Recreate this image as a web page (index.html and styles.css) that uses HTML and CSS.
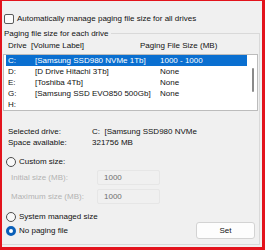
FILE: index.html
```html
<!DOCTYPE html>
<html>
<head>
<meta charset="utf-8">
<link rel="stylesheet" href="styles.css">
</head>
<body>
<div class="frame">
  <label class="auto">
    <span class="check"></span>
    <span>Automatically manage paging file size for all drives</span>
  </label>
  <fieldset class="group">
    <legend class="legend">Paging file size for each drive</legend>
    <div class="head">
      <span class="c-drive">Drive&nbsp; [Volume Label]</span>
      <span class="c-headsize">Paging File Size (MB)</span>
    </div>
    <div class="list">
      <div class="rows">
        <div class="row sel"><span class="c-letter">C:</span><span class="c-label">[Samsung SSD980 NVMe 1Tb]</span><span class="c-size">1000 - 1000</span></div>
        <div class="row"><span class="c-letter">D:</span><span class="c-label">[D Drive Hitachi 3Tb]</span><span class="c-size">None</span></div>
        <div class="row"><span class="c-letter">E:</span><span class="c-label">[Toshiba 4Tb]</span><span class="c-size">None</span></div>
        <div class="row"><span class="c-letter">G:</span><span class="c-label">[Samsung SSD EVO850 500Gb]</span><span class="c-size">None</span></div>
        <div class="row"><span class="c-letter">H:</span><span class="c-label"></span><span class="c-size"></span></div>
      </div>
      <div class="scroll"><div class="thumb"></div></div>
    </div>
    <div class="info">
      <span>Selected drive:</span><span>C:&nbsp; [Samsung SSD980 NVMe</span>
      <span>Space available:</span><span>321756 MB</span>
    </div>
    <div class="radio custom"><span class="dot"></span><span>Custom size:</span></div>
    <div class="field">
      <span class="flabel">Initial size (MB):</span>
      <span class="box">1000</span>
    </div>
    <div class="field">
      <span class="flabel">Maximum size (MB):</span>
      <span class="box">1000</span>
    </div>
    <div class="radio system"><span class="dot"></span><span>System managed size</span></div>
    <div class="bottom">
      <div class="radio"><span class="dot on"></span><span>No paging file</span></div>
      <button class="set">Set</button>
    </div>
  </fieldset>
</div>
</body>
</html>
```

FILE: styles.css
```css
html, body {
  margin: 0;
  padding: 0;
  background: #ffffff;
}
body {
  width: 265px;
  height: 250px;
  font-family: "Liberation Sans", Arial, sans-serif;
  font-size: 8px;
  line-height: 11px;
  color: #111111;
}
.frame {
  box-sizing: border-box;
  width: 265px;
  height: 250px;
  background: #f0f0f0;
  border-style: solid;
  border-color: #e3131c;
  border-width: 1px 3px 3px 2px;
  padding: 12px 0 0 0;
  display: flex;
  flex-direction: column;
}
.auto {
  display: flex;
  align-items: center;
  gap: 3px;
  padding-left: 2px;
  height: 11px;
}
.check {
  width: 8px;
  height: 8px;
  border: 1px solid #5a5a5a;
  border-radius: 2px;
  background: #fbfbfb;
}
.group {
  margin: 4px 2px 2px 0;
  padding: 0;
  border: 1px solid #d9d9d9;
  border-left: none;
  flex: 1;
  min-width: 0;
}
.legend {
  padding: 0 2px;
  margin-left: 0;
  line-height: 11px;
}
.head {
  display: flex;
  margin-top: 1px;
  height: 11px;
  padding-left: 6px;
}
.c-drive {
  width: 132px;
}
.list {
  margin: 3px 1px 0 1px;
  height: 55px;
  border: 1px solid #bcbcbc;
  background: #ffffff;
  display: flex;
}
.rows {
  flex: 1;
  padding-left: 2px;
}
.row {
  display: flex;
  height: 11px;
  padding-left: 2px;
}
.row.sel {
  background: #0a6fd0;
  color: #ffffff;
}
.c-letter {
  width: 27px;
}
.c-label {
  width: 125px;
  white-space: nowrap;
}
.scroll {
  width: 10px;
  position: relative;
}
.thumb {
  position: absolute;
  left: 5px;
  top: 13px;
  width: 2px;
  height: 24px;
  background: #8a8a8a;
  border-radius: 1px;
}
.info {
  display: grid;
  grid-template-columns: 84px auto;
  margin-top: 16px;
  padding-left: 6px;
  line-height: 10.5px;
}
.radio {
  display: flex;
  align-items: center;
  gap: 3px;
  padding-left: 4px;
  height: 11px;
}
.custom {
  margin-top: 8px;
}
.dot {
  box-sizing: border-box;
  width: 10px;
  height: 10px;
  border: 1px solid #4d4d4d;
  border-radius: 50%;
  background: #f8f8f8;
}
.dot.on {
  border: 3px solid #0a5fb8;
  background: #ffffff;
}
.field {
  display: flex;
  align-items: center;
  padding-left: 9px;
  margin-top: 3px;
  height: 15px;
  color: #b3b3b3;
}
.field + .field {
  margin-top: 4px;
}
.flabel {
  width: 86px;
}
.box {
  box-sizing: border-box;
  width: 63px;
  height: 15px;
  border: 1px solid #e6e6e6;
  border-radius: 2px;
  padding-left: 6px;
  color: #6f6f6f;
  display: flex;
  align-items: center;
}
.system {
  margin-top: 7px;
}
.bottom {
  display: flex;
  align-items: center;
  justify-content: space-between;
  margin-top: 0;
  padding-right: 4px;
}
.set {
  width: 59px;
  height: 17px;
  background: #fdfdfd;
  border: 1px solid #d3d3d3;
  border-radius: 3px;
  font-family: inherit;
  font-size: 8px;
  color: #111111;
  padding: 0;
}
```
